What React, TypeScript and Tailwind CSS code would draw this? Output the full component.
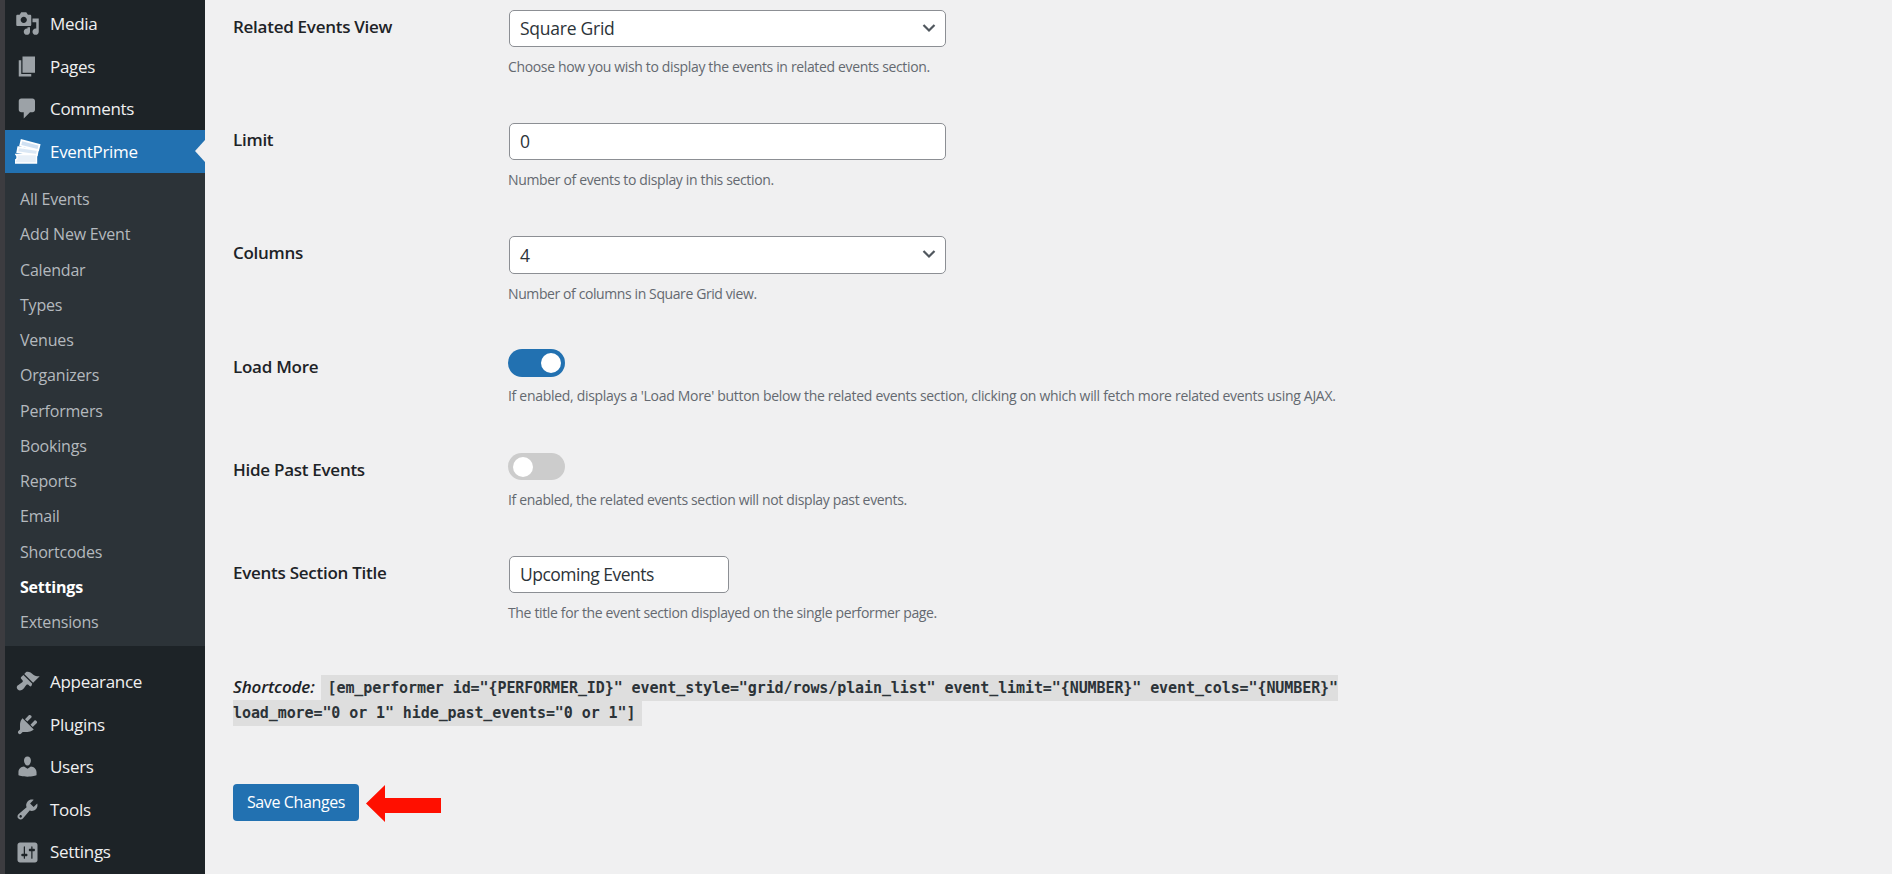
const icons: Record<string, string> = {
  media: "M13 11V4c0-.55-.45-1-1-1h-1.67L9 1H5L3.67 3H2c-.55 0-1 .45-1 1v7c0 .55.45 1 1 1h10c.55 0 1-.45 1-1zM7 4.5c1.38 0 2.5 1.12 2.5 2.5S8.38 9.5 7 9.5 4.5 8.38 4.5 7 5.62 4.5 7 4.5zM14 6h5v10.5c0 1.38-1.12 2.5-2.5 2.5S14 17.88 14 16.5s1.12-2.5 2.5-2.5c.17 0 .34.02.5.05V9h-3V6zm-4 8.05V13h2v3.5c0 1.38-1.12 2.5-2.5 2.5S7 17.88 7 16.5 8.12 14 9.5 14c.17 0 .34.02.5.05z",
  pages: "M6 15V2h10v13H6zm-1 1h8v2H3V5h2v11z",
  comments: "M5 2h9c1.1 0 2 .9 2 2v7c0 1.1-.9 2-2 2h-2l-5 5v-5H5c-1.1 0-2-.9-2-2V4c0-1.1.9-2 2-2z",
  appearance: "M14.48 11.06L7.41 3.99l1.5-1.5c.5-.56 2.3-.47 3.51.32 1.21.8 1.43 1.28 2.91 2.1 1.18.64 2.45 1.26 4.45.85zm-.71.71L6.7 4.7 4.93 6.47c-.39.39-.39 1.02 0 1.41l1.06 1.06c.39.39.39 1.03 0 1.42-.6.6-1.43 1.11-2.21 1.69-.35.26-.7.53-1.01.84C1.43 13.23.9 15.1 2.2 16.4c1.3 1.3 3.17.77 4.51-.57.31-.31.58-.66.84-1.01.58-.78 1.09-1.61 1.69-2.21.39-.39 1.03-.39 1.42 0l1.06 1.06c.39.39 1.02.39 1.41 0z",
  plugins: "M13.11 4.36L9.87 7.6 8 5.73l3.24-3.24c.35-.34 1.05-.2 1.56.32.52.51.66 1.21.31 1.55zm-8 1.77l.91-1.12 9.01 9.01-1.19.84c-.71.71-2.63 1.16-3.82 1.16H6.14L4.9 17.26c-.59.59-1.54.59-2.12 0-.59-.58-.59-1.53 0-2.12l1.24-1.24v-3.88c0-1.13.4-3.19 1.09-3.89zm7.26 3.97l3.24-3.24c.34-.35 1.04-.21 1.55.31.52.51.66 1.21.31 1.55l-3.24 3.25z",
  users: "M10 9.25c-2.27 0-2.73-3.44-2.73-3.44C7 4.02 7.82 2 9.97 2c2.16 0 2.98 2.02 2.71 3.81 0 0-.41 3.44-2.68 3.44zm0 2.57L12.72 10c2.39 0 4.52 2.33 4.52 4.53v2.49s-3.65 1.13-7.24 1.13c-3.65 0-7.24-1.13-7.24-1.13v-2.49c0-2.25 1.94-4.48 4.47-4.48z",
  tools: "M16.68 9.77c-1.34 1.34-3.3 1.67-4.95.99l-5.41 6.52c-.99.99-2.59.99-3.58 0s-.99-2.59 0-3.57l6.52-5.42c-.68-1.65-.35-3.61.99-4.95 1.28-1.28 3.12-1.62 4.72-1.06l-2.89 2.89 2.82 2.82 2.86-2.87c.53 1.58.18 3.39-1.08 4.65zM3.81 16.21c.4.39 1.04.39 1.43 0 .4-.4.4-1.04 0-1.43-.39-.4-1.03-.4-1.43 0-.39.39-.39 1.03 0 1.43z",
  settings: "M18 16V4c0-1.1-.9-2-2-2H4c-1.1 0-2 .9-2 2v12c0 1.1.9 2 2 2h12c1.1 0 2-.9 2-2zM8 11h1c.55 0 1 .45 1 1s-.45 1-1 1H8v1.5c0 .28-.22.5-.5.5s-.5-.22-.5-.5V13H6c-.55 0-1-.45-1-1s.45-1 1-1h1V5.5c0-.28.22-.5.5-.5s.5.22.5.5V11zm5-2h-1c-.55 0-1-.45-1-1s.45-1 1-1h1V5.5c0-.28.22-.5.5-.5s.5.22.5.5V7h1c.55 0 1 .45 1 1s-.45 1-1 1h-1v5.5c0 .28-.22.5-.5.5s-.5-.22-.5-.5V9z",
};

function Icon({ name }: { name: string }) {
  return (
    <svg viewBox="0 0 20 20" className="w-[25px] h-[25px] fill-[#9ca2a7] shrink-0">
      <path d={icons[name]} fillRule="evenodd" />
    </svg>
  );
}

function TopItem({ name, label, h = "h-[42.5px]" }: { name: string; label: string; h?: string }) {
  return (
    <div className={`flex items-center pl-[10px] gap-[10px] text-[17px] tracking-[-0.3px] text-[#f0f0f1] ${h}`}>
      <Icon name={name} />
      <span>{label}</span>
    </div>
  );
}

const subs = ["All Events", "Add New Event", "Calendar", "Types", "Venues", "Organizers", "Performers", "Bookings", "Reports", "Email", "Shortcodes", "Settings", "Extensions"];

function Ticket() {
  return (
    <svg viewBox="0 0 26 25" className="w-[26px] h-[25px] shrink-0">
      <path d="M6.5 1.2l18 4.6-1.3 5.4-18-4.6z" fill="#cfe0f2" stroke="#fff" strokeWidth="1.8" />
      <path d="M3.2 8.2l19.6 3-.9 5-19.6-3z" fill="#dbe8f5" stroke="#fff" strokeWidth="1.8" />
      <path d="M1 15.5h20.5v8.5H.2v-3c1.1 0 1.9-.9 1.9-2.7 0-1-.4-2-1.1-2.8z" fill="#e8f0f8" stroke="#fff" strokeWidth="1.4" />
    </svg>
  );
}

function Sidebar() {
  return (
    <aside className="w-[205px] shrink-0 flex h-full">
      <div className="w-[5px] bg-[#3c3c40] shrink-0" />
      <div className="w-[200px] bg-[#1d2327] flex flex-col pt-[2.5px]">
        <TopItem name="media" label="Media" />
        <TopItem name="pages" label="Pages" />
        <TopItem name="comments" label="Comments" />
        <div className="relative h-[43px] bg-[#2271b1] flex items-center pl-[10px] gap-[9px] text-[17px] tracking-[-0.3px] text-white">
          <Ticket />
          <span>EventPrime</span>
          <div className="absolute right-0 top-[10px] w-0 h-0 border-y-[11px] border-y-transparent border-r-[10px] border-r-[#f0f0f1]" />
        </div>
        <div className="bg-[#2c3338] h-[473px] pt-[8.5px] flex flex-col">
          {subs.map((s) => (
            <div key={s} className={`h-[35.25px] shrink-0 flex items-center pl-[15px] text-[16px] tracking-[-0.2px] ${s === "Settings" ? "font-bold text-white" : "text-[#b4b9be]"}`}>
              {s}
            </div>
          ))}
        </div>
        <div className="pt-[14.5px] flex flex-col">
          <TopItem name="appearance" label="Appearance" h="h-[42.6px]" />
          <TopItem name="plugins" label="Plugins" h="h-[42.6px]" />
          <TopItem name="users" label="Users" h="h-[42.6px]" />
          <TopItem name="tools" label="Tools" h="h-[42.6px]" />
          <TopItem name="settings" label="Settings" h="h-[42.6px]" />
        </div>
      </div>
    </aside>
  );
}

function Chevron() {
  return (
    <svg viewBox="0 0 14 10" className="w-[14px] h-[10px] fill-none stroke-[#50575e] stroke-[2.2] absolute right-[9px] top-[12px]">
      <path d="M1.5 2l5.5 5.5 5.5-5.5" />
    </svg>
  );
}

function Box({ children, select, w = "w-[437px]", h = "h-[37px]", track = "tracking-[-0.25px]" }: { children: string; select?: boolean; w?: string; h?: string; track?: string }) {
  return (
    <div className={`relative ${w} ${h} bg-white border border-[#8c8f94] rounded-[5px] pl-[10px] flex items-center text-[17.5px] ${track} text-[#2c3338]`}>
      {children}
      {select && <Chevron />}
    </div>
  );
}

function Toggle({ on }: { on?: boolean }) {
  return (
    <div className={`w-[57px] -ml-[1px] rounded-full flex items-center ${on ? "h-[28px] px-[4px] bg-[#2271b1] justify-end" : "h-[27px] px-[5px] bg-[#ccc] justify-start"}`}>
      <div className="w-[20px] h-[20px] rounded-full bg-white" />
    </div>
  );
}

function Row({ label, desc, children, h, labelPt = "pt-[4px]", gap = "mt-[9px]", track = "tracking-[-0.35px]" }: { label: string; desc: string; children: React.ReactNode; h: string; labelPt?: string; gap?: string; track?: string }) {
  return (
    <div className={`flex ${h}`}>
      <div className={`w-[275px] shrink-0 font-semibold text-[17px] tracking-[-0.27px] text-[#1d2327] ${labelPt}`}>{label}</div>
      <div className="pl-[1px]">
        {children}
        <p className={`${gap} -ml-[1px] text-[14px] ${track} text-[#646970]`}>{desc}</p>
      </div>
    </div>
  );
}

export default function App() {
  return (
    <div className="flex w-[1892px] h-[874px] overflow-hidden bg-[#f0f0f1]" style={{ fontFamily: '"Open Sans", sans-serif' }}>
      <Sidebar />
      <main className="flex-1 pl-[28px] pt-[10px] flex flex-col">
        <Row label="Related Events View" desc="Choose how you wish to display the events in related events section." h="h-[113px]"><Box select>Square Grid</Box></Row>
        <Row label="Limit" desc="Number of events to display in this section." h="h-[113px]"><Box>0</Box></Row>
        <Row label="Columns" desc="Number of columns in Square Grid view." h="h-[113px]" track="tracking-[-0.4px]"><Box select h="h-[38px]">4</Box></Row>
        <Row label="Load More" desc="If enabled, displays a 'Load More' button below the related events section, clicking on which will fetch more related events using AJAX." h="h-[104px]" labelPt="pt-[5px]" gap="mt-[8px]" track="tracking-[-0.3px]"><Toggle on /></Row>
        <Row label="Hide Past Events" desc="If enabled, the related events section will not display past events." h="h-[103px]"><Toggle /></Row>
        <Row label="Events Section Title" desc="The title for the event section displayed on the single performer page." h="h-[113px]"><Box w="w-[220px]" track="tracking-[-0.5px]">Upcoming Events</Box></Row>
        <div className="w-[1110px] mt-[6px] leading-[24px]">
          <em className="font-semibold text-[17px] tracking-[-0.15px] text-[#1d2327] mr-[6px]">Shortcode:</em>
          <code className="bg-[#dedede] px-[7px] py-[4px] font-bold text-[15px] tracking-[-0.09px] text-[#2c3338]" style={{ fontFamily: '"DejaVu Sans Mono", monospace' }}>
            [em_performer id="{"{"}PERFORMER_ID{"}"}" event_style="grid/rows/plain_list" event_limit="{"{"}NUMBER{"}"}" event_cols="{"{"}NUMBER{"}"}" load_more="0 or 1" hide_past_events="0 or 1"]
          </code>
        </div>
        <div className="mt-[57px] flex items-center">
          <div className="w-[126px] h-[37px] rounded-[4px] bg-[#2271b1] text-white text-[16px] tracking-[-0.37px] flex items-center justify-center">Save Changes</div>
          <svg viewBox="0 0 75 37" className="w-[75px] h-[37px] ml-[7px] mt-[3px]">
            <path d="M0 18.5L19 0v13h56v15H19v9z" fill="#ff0f00" />
          </svg>
        </div>
      </main>
    </div>
  );
}
